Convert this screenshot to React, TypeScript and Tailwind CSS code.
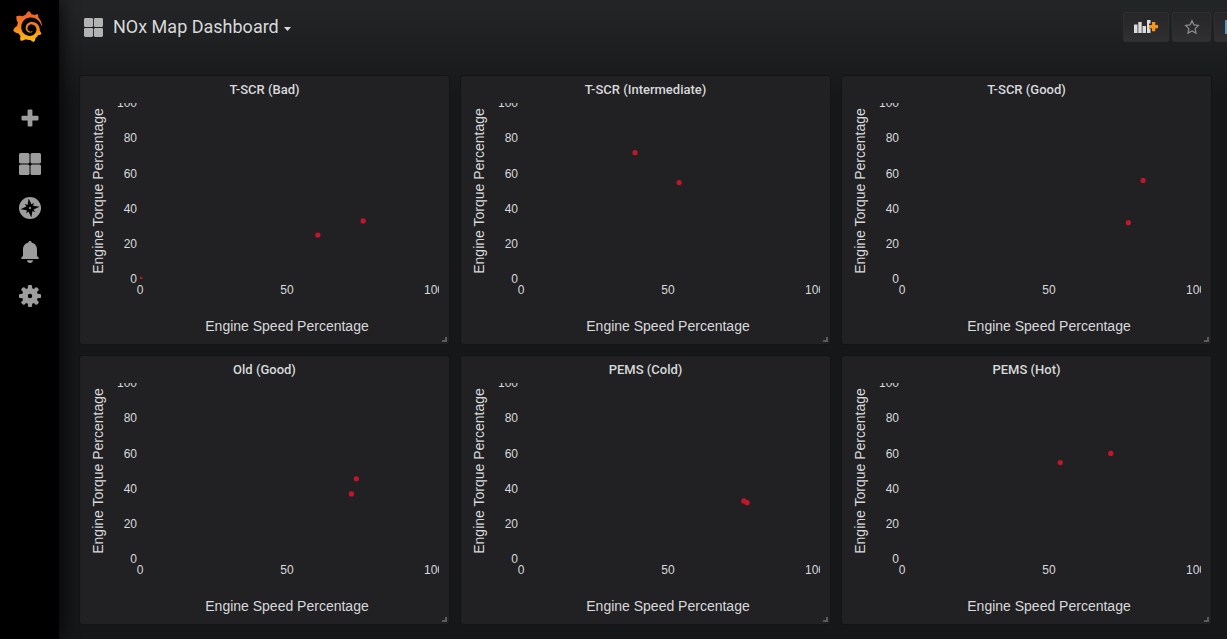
import type { ReactNode } from 'react';
import { SiGrafana } from 'react-icons/si';

type Point = [speed: number, torque: number];

const panels: { title: string; points: Point[] }[] = [
  { title: 'T-SCR (Bad)', points: [[0, 0], [60.5, 25], [75.9, 33]] },
  { title: 'T-SCR (Intermediate)', points: [[38.8, 71.8], [53.8, 54.8]] },
  { title: 'T-SCR (Good)', points: [[82, 56], [77, 32]] },
  { title: 'Old (Good)', points: [[73.6, 45.6], [71.9, 37]] },
  { title: 'PEMS (Cold)', points: [[75.8, 33], [76.9, 32]] },
  { title: 'PEMS (Hot)', points: [[53.8, 54.8], [71, 60]] },
];

const ORIGIN_X = 50;
const ORIGIN_Y = 176;
const PLOT_W = 294;
const PLOT_H = 176;

function ScatterChart({ id, points }: { id: string; points: Point[] }) {
  return (
    <svg viewBox="0 0 349 236" className="block w-full overflow-hidden font-['Liberation_Sans',Arial,sans-serif]" role="img" aria-label="Torque against speed">
      <clipPath id={id}>
        <rect x={ORIGIN_X} y="0" width={PLOT_W} height={PLOT_H} />
      </clipPath>
      <g className="fill-[#d8d9da] text-[12px]">
        {[0, 20, 40, 60, 80, 100].map((v) => (
          <text key={v} x={ORIGIN_X - 3} y={Math.ceil(ORIGIN_Y - (v / 100) * PLOT_H - 0.3) + 4} textAnchor="end">{v}</text>
        ))}
        {[0, 50, 100].map((v) => (
          <text key={v} x={ORIGIN_X + (v / 100) * PLOT_W} y={ORIGIN_Y + 15} textAnchor="middle">{v}</text>
        ))}
      </g>
      <g className="fill-[#d8d9da] text-[14px]" textAnchor="middle">
        <text x="197" y="228">Engine Speed Percentage</text>
        <text transform="translate(13 88) rotate(-90)">Engine Torque Percentage</text>
      </g>
      <g clipPath={`url(#${id})`} className="fill-[#c4162a]">
        {points.map(([x, y]) => (
          <circle key={`${x}-${y}`} cx={ORIGIN_X + (x / 100) * PLOT_W} cy={ORIGIN_Y - (y / 100) * PLOT_H} r="2.6" />
        ))}
      </g>
    </svg>
  );
}

function Panel({ title, points, id }: { title: string; points: Point[]; id: string }) {
  return (
    <section className="relative rounded-[3px] border border-[#141414] bg-[#212124] px-[10px] pb-[5px]">
      <h2 className="h-[27px] text-center text-[13px] leading-7 font-medium text-[#d8d9da]">{title}</h2>
      <ScatterChart id={id} points={points} />
      <span className="absolute right-[2px] bottom-[2px] size-[5px] border-r-2 border-b-2 border-[#5b5b5e]" />
    </section>
  );
}

function TilesIcon({ size }: { size: number }) {
  return (
    <svg width={size} height={size} viewBox="0 0 22 22" fill="currentColor">
      <rect width="10.5" height="10.5" rx="1.6" />
      <rect x="11.5" width="10.5" height="10.5" rx="1.6" />
      <rect y="11.5" width="10.5" height="10.5" rx="1.6" />
      <rect x="11.5" y="11.5" width="10.5" height="10.5" rx="1.6" />
    </svg>
  );
}

function PlusIcon() {
  return (
    <svg width="22" height="22" viewBox="0 0 22 22" fill="currentColor">
      <rect x="2.5" y="6.7" width="17" height="4.8" rx="1" />
      <rect x="8.6" y="0.6" width="4.8" height="17" rx="1" />
    </svg>
  );
}

function CompassIcon() {
  return (
    <svg width="22" height="22" viewBox="0 0 22 22">
      <circle cx="11" cy="11" r="11" fill="currentColor" />
      <g transform="rotate(-8 11 11)" fill="#000">
        <path d="M11 1.4 13.3 8.7 20.6 11 13.300 13.300 11 20.600 8.700 13.300 1.400 11 8.700 8.700Z" />
        <path d="M6.400 6.400 11 8.600 15.600 6.400 13.400 11 15.600 15.600 11 13.400 6.400 15.600 8.600 11Z" />
      </g>
      <circle cx="11" cy="11" r="1.1" fill="currentColor" />
    </svg>
  );
}

function BellIcon() {
  return (
    <svg width="22" height="22" viewBox="0 0 22 22" fill="currentColor">
      <path d="M11 0c1 0 1.600.6 1.600 1.500C15.900 2.300 18 4.900 18 8.600v5.400c0 1.300.8 1.700 1.600 2.400.5.500.3 1.600-.5 1.600H2.900c-.8 0-1-1.100-.5-1.600C3.200 15.700 4 15.300 4 14V8.600c0-3.700 2.100-6.300 5.400-7.100C9.400.600 10 0 11 0Z" />
      <path d="M8 19.200h6c0 1.600-1.300 2.700-3 2.700s-3-1.100-3-2.700Z" />
    </svg>
  );
}

function GearIcon() {
  return (
    <svg width="22" height="22" viewBox="0 0 22 22" fill="currentColor">
      {[0, 45, 90, 135].map((a) => (
        <rect key={a} x="8.9" y="0" width="4.2" height="22" rx="1.200" transform={`rotate(${a} 11 11)`} />
      ))}
      <circle cx="11" cy="11" r="8" />
      <circle cx="11" cy="11" r="2.200" fill="#000" />
    </svg>
  );
}

function AddPanelIcon() {
  return (
    <svg width="24" height="14" viewBox="0 0 24 14">
      <g fill="#dcdcdc">
        <path d="M0 4.500h3.500V13H0ZM4.300 2h3.400v11H4.300ZM8.500 6H12v7H8.500Z" />
        <path d="M13 0h3.500v3.500H15v5h1.500V13H13Z" />
      </g>
      <path d="M18 2h3.300v3h3v3.300h-3v3H18v-3h-3V5h3Z" fill="#f7941e" />
    </svg>
  );
}

function StarIcon() {
  return (
    <svg width="16" height="16" viewBox="0 0 16 16" fill="none" stroke="currentColor" strokeWidth="1.200">
      <path d="m8 1.700 1.950 4.150 4.450.6-3.250 3.150.8 4.500L8 11.950 4.050 14.100l.8-4.500L1.600 6.450l4.450-.6Z" />
    </svg>
  );
}

function ShareIcon() {
  return (
    <svg width="24" height="16" viewBox="0 0 24 16" fill="none" stroke="#5794c7" strokeWidth="2">
      <path d="M12 2H1v12h18v-4M8 10c0-4 5-5 12-5m-4-4 5 4-5 4" />
    </svg>
  );
}

function ToolButton({ label, wide, children }: { label: string; wide?: boolean; children: ReactNode }) {
  return (
    <button
      type="button"
      aria-label={label}
      className={`${wide ? 'w-[46px]' : 'w-[39px]'} flex h-[30px] items-center justify-center rounded-[2px] border border-[#2f2f32] bg-linear-to-b from-[#262628] to-[#303033] text-[#8e8e90]`}
    >
      {children}
    </button>
  );
}

const navItems = [
  { label: 'Create', icon: <PlusIcon /> },
  { label: 'Dashboards', icon: <TilesIcon size={22} /> },
  { label: 'Explore', icon: <CompassIcon /> },
  { label: 'Alerting', icon: <BellIcon /> },
  { label: 'Configuration', icon: <GearIcon /> },
];

export default function App() {
  return (
    <div className="flex min-h-screen bg-[#161719] bg-[linear-gradient(180deg,#222426_10px,#161719_100px)] font-[Roboto,sans-serif] text-[#d8d9da]">
      <aside className="z-10 flex w-[59px] shrink-0 flex-col items-center bg-black shadow-[0_0_20px_black]">
        <svg width="0" height="0" className="absolute" aria-hidden="true">
          <linearGradient id="flame" x1="0" y1="1" x2="0" y2="0">
            <stop offset="0" stopColor="#fcc10f" />
            <stop offset="0.500" stopColor="#f58220" />
            <stop offset="1" stopColor="#f05a28" />
          </linearGradient>
        </svg>
        <a href="#home" aria-label="Home" className="mt-[11px] mr-[5px]">
          <SiGrafana size={31} fill="url(#flame)" />
        </a>
        <nav className="mt-14 flex flex-col pl-px text-[#9d9d9d]">
          {navItems.map((item) => (
            <a key={item.label} href={`#${item.label.toLowerCase()}`} aria-label={item.label} className="flex h-11 items-center">
              {item.icon}
            </a>
          ))}
        </nav>
      </aside>
      <div className="min-w-0 flex-1 overflow-hidden">
        <header className="flex h-[54px] items-center pl-[25px]">
          <button type="button" className="flex items-center text-[18px] leading-6">
            <span className="mr-[10px] text-[#b3b3b3]"><TilesIcon size={19} /></span>
            NOx Map Dashboard
            <svg width="7" height="4" viewBox="0 0 7 4" className="mt-1 ml-[5px]" fill="currentColor"><path d="M0 0h7L3.500 4Z" /></svg>
          </button>
          <div className="-mr-[33px] ml-auto flex gap-[3px]">
            <ToolButton label="Add panel" wide><AddPanelIcon /></ToolButton>
            <ToolButton label="Mark as favorite"><StarIcon /></ToolButton>
            <ToolButton label="Share dashboard" wide><ShareIcon /></ToolButton>
          </div>
        </header>
        <main className="grid grid-cols-3 gap-[10px] pt-[21px] pr-[15px] pb-[14px] pl-5">
          {panels.map((p, i) => (
            <Panel key={p.title} id={`plot-${i}`} title={p.title} points={p.points} />
          ))}
        </main>
      </div>
    </div>
  );
}
